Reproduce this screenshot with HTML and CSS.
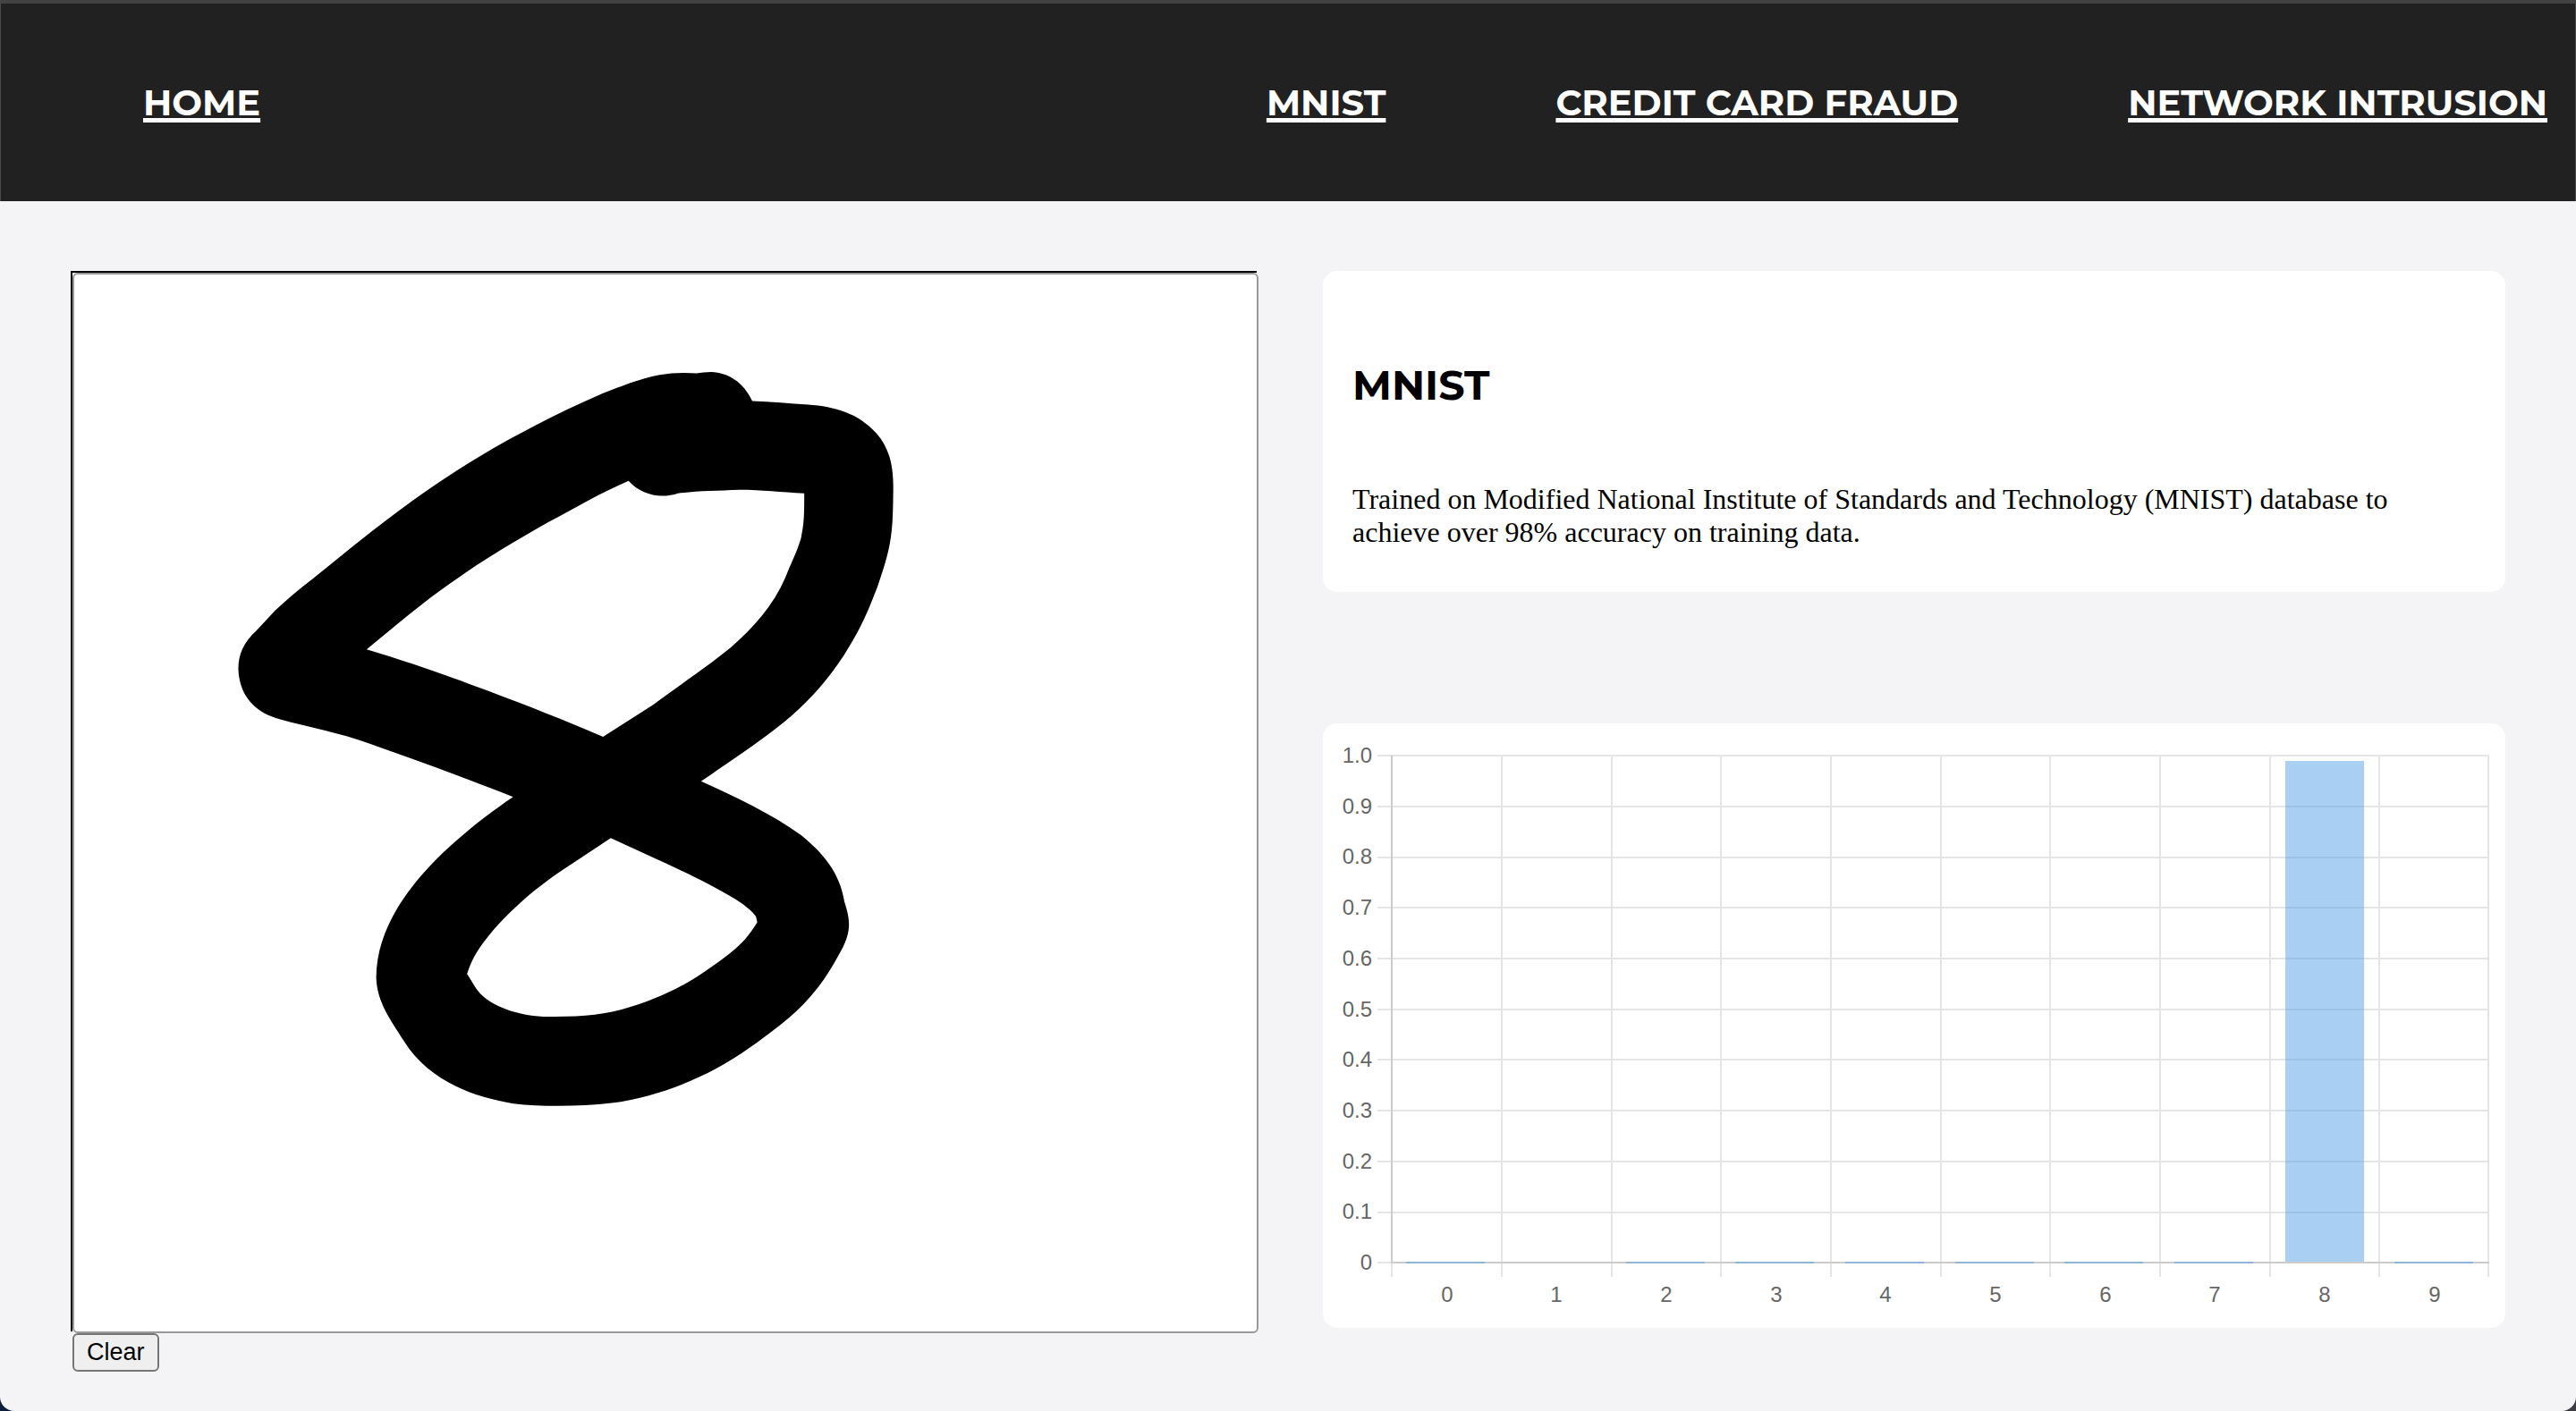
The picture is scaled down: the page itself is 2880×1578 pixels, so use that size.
FILE: index.html
```html
<!DOCTYPE html>
<html lang="en">
<head>
<meta charset="utf-8">
<title>MNIST</title>
<link rel="stylesheet" href="styles.css">
</head>
<body>
<header class="site-header">
  <a class="nav-link" href="#home">HOME</a>
  <nav class="nav-models">
    <a class="nav-link" href="#mnist">MNIST</a>
    <a class="nav-link" href="#credit">CREDIT CARD FRAUD</a>
    <a class="nav-link" href="#network">NETWORK INTRUSION</a>
  </nav>
</header>
<main class="layout">
  <section class="draw">
    <div class="pad-shadow">
      <div class="pad">
        <svg class="drawing" viewBox="0 0 1322 1182" role="img" aria-label="Hand-drawn digit">
          <g transform="translate(157 73) scale(.5102 .5612)">
            <path fill-rule="evenodd" d="M1056 67Q1015 64 975 70C930 78 890 93 850 107C798 128 750 148 700 172C610 214 520 264 430 323C355 372 287 424 215 476Q170 507 132 540L92 579C62 603 51 630 52 658C54 700 78 740 142 756C210 773 270 782 340 805C440 837 540 870 654 911C600 944 530 993 472 1048C410 1108 354 1185 354 1272C356 1320 385 1355 415 1398C470 1478 570 1510 655 1522C720 1529 800 1528 870 1521C950 1511 1030 1486 1100 1452C1150 1427 1190 1400 1240 1365C1300 1322 1335 1280 1365 1230C1398 1180 1393 1158 1380 1120C1370 1060 1330 1020 1285 987C1220 945 1140 910 1066 880C1120 846 1160 822 1215 785C1290 735 1350 675 1392 609C1425 560 1440 520 1452 493C1485 410 1486 380 1487 300C1488 250 1478 215 1450 186C1410 146 1360 133 1300 129C1260 127 1220 123 1178 122C1160 85 1125 65 1088 64Q1070 64 1056 67ZM907 281C925 300 955 311 980 311Q1000 311 1015 306C1060 301 1100 301 1150 299C1200 299 1240 304 1292 306C1292 350 1292 365 1285 395C1275 425 1262 447 1250 475C1225 528 1180 575 1130 614C1070 658 1020 687 960 728L851 791C760 756 690 731 600 700C520 673 430 643 333 617C400 568 450 527 520 483C586 440 660 400 730 364C790 335 850 303 907 281ZM868 993C950 1028 1060 1070 1140 1114Q1170 1130 1186 1149L1189 1161C1170 1189 1155 1204 1130 1222C1050 1278 990 1310 890 1335C840 1347 790 1349 720 1349C660 1346 610 1328 583 1304C570 1292 562 1275 553 1264C565 1230 580 1210 610 1177C655 1131 700 1095 760 1058Z"/>
          </g>
        </svg>
      </div>
    </div>
    <button class="clear" type="button">Clear</button>
  </section>
  <div class="side">
    <section class="card about">
      <h1 class="title">MNIST</h1>
      <p class="text">Trained on Modified National Institute of Standards and Technology (MNIST) database to achieve over 98% accuracy on training data.</p>
    </section>
    <section class="card">
      <svg class="chart" viewBox="0 0 1322 676" role="img" aria-label="Probability of each digit">
        <path class="grid" d="M61 36H1304M61 93H1304M61 150H1304M61 206H1304M61 263H1304M61 320H1304M61 376H1304M61 433H1304M61 490H1304M61 547H1304M61 603H77M200 36V619M323 36V619M445 36V619M568 36V619M691 36V619M813 36V619M936 36V619M1059 36V619M1181 36V619M1303 36V619M77 604V619"/>
        <path class="axis" d="M77 36V603M76 603H1304"/>
        <path class="bar" d="M1076 42H1164V602H1076ZM93 602H181V604H93ZM339 602H427V604H339ZM461 602H549V604H461ZM584 602H672V604H584ZM707 602H795V604H707ZM829 602H917V604H829ZM952 602H1040V604H952ZM1198 602H1286V604H1198Z"/>
        <g class="ticks ticks-y">
          <text x="55" y="44">1.0</text>
          <text x="55" y="101">0.9</text>
          <text x="55" y="157">0.8</text>
          <text x="55" y="214">0.7</text>
          <text x="55" y="271">0.6</text>
          <text x="55" y="328">0.5</text>
          <text x="55" y="384">0.4</text>
          <text x="55" y="441">0.3</text>
          <text x="55" y="498">0.2</text>
          <text x="55" y="554">0.1</text>
          <text x="55" y="611">0</text>
        </g>
        <g class="ticks ticks-x">
          <text x="139" y="647">0</text>
          <text x="261" y="647">1</text>
          <text x="384" y="647">2</text>
          <text x="507" y="647">3</text>
          <text x="629" y="647">4</text>
          <text x="752" y="647">5</text>
          <text x="875" y="647">6</text>
          <text x="997" y="647">7</text>
          <text x="1120" y="647">8</text>
          <text x="1243" y="647">9</text>
        </g>
      </svg>
    </section>
  </div>
</main>
</body>
</html>
```
FILE: styles.css
```css
* { box-sizing: border-box; }

html { background: linear-gradient(to right, #0b1c3c, #3c3e44); }

body {
  margin: 0;
  min-height: 100vh;
  background: #f4f4f7;
  border-radius: 0 0 16px 16px;
  font-family: "Liberation Serif", serif;
}

.site-header {
  display: flex;
  justify-content: space-between;
  align-items: center;
  padding: 50px 31px 50px 159px;
  background: #212121;
  border: 1px solid #484848;
  border-top: 4px solid #424242;
  border-bottom: 0;
  height: 225px;
}

.nav-models { display: flex; gap: 190px; }

.nav-link {
  color: #fff;
  font: 700 40px/52px Montserrat, Inter, sans-serif;
  text-decoration: underline;
  text-decoration-thickness: 5px;
  text-underline-offset: 3px;
  text-decoration-skip-ink: none;
}

.layout {
  display: grid;
  grid-template-columns: 1326fr 1322fr;
  gap: 72px;
  align-items: start;
  padding: 78px 79px 44px 81px;
}

.draw { padding-top: 2px; }

.pad-shadow { box-shadow: -2px -2px 0 #000; }

.pad {
  border: 2px solid #999;
  border-radius: 6px;
  background: #fff;
}

.drawing, .chart { display: block; width: 100%; height: auto; }

.clear {
  display: block;
  padding: 2px 14px;
  border: 2px solid #767676;
  border-radius: 6px;
  background: #efefef;
  color: #000;
  font: 27px/35px "Liberation Sans", sans-serif;
}

.side { display: grid; gap: 147px; }

.card {
  border-radius: 16px;
  background: #fff;
}

.about { padding: 98px 32px 48px 33px; }

.title {
  margin: 0;
  font: 700 46px/60px Montserrat, Inter, sans-serif;
}

.text {
  margin: 79px 0 0;
  padding-right: 60px;
  font-size: 32px;
  line-height: 37px;
}

.grid, .axis { fill: none; stroke-width: 2; }
.grid { stroke: rgba(0, 0, 0, .1); }
.axis { stroke: #cbcbcb; }
.bar { fill: rgba(84, 159, 231, .5); }

.ticks {
  fill: #666;
  font: 24px "Liberation Sans", sans-serif;
}
.ticks-y { text-anchor: end; }
.ticks-x { text-anchor: middle; }
```
